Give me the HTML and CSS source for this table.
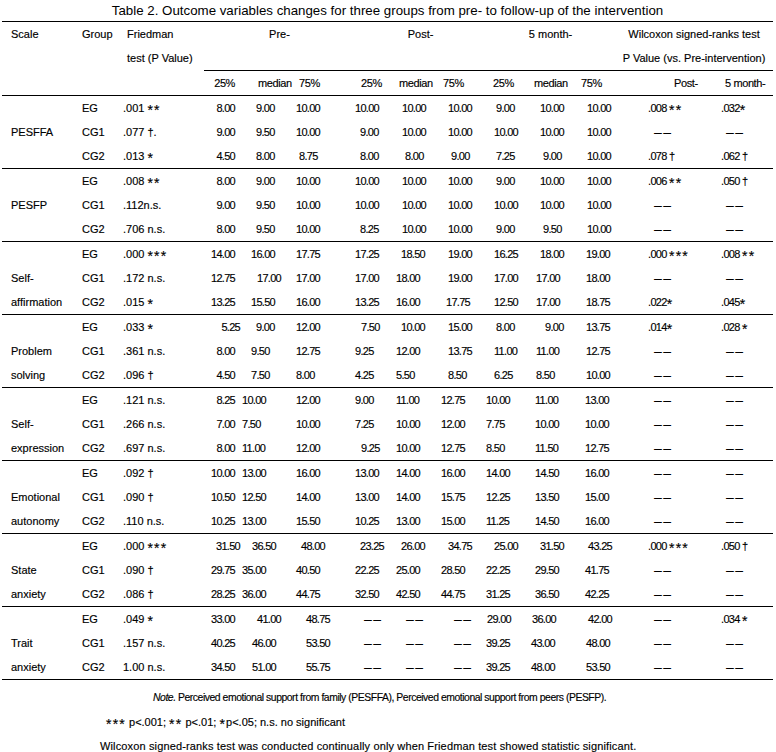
FILE: index.html
```html
<!DOCTYPE html>
<html lang="en">
<head>
<meta charset="utf-8">
<title>Table 2</title>
<link rel="stylesheet" href="styles.css">
</head>
<body>
<div class="page">
<h1 class="title">Table 2. Outcome variables changes for three groups from pre- to follow-up of the intervention</h1>
<table class="tbl">
<colgroup>
<col class="w80"><col class="w41"><col class="w81"><col class="w38"><col class="w54"><col class="w59"><col class="w41"><col class="w45"><col class="w45"><col class="w45"><col class="w50"><col class="w34"><col class="w106"><col class="w52">
</colgroup>
<thead>
<tr><th class="sc" rowspan="3">Scale</th><th class="gp" rowspan="3">Group</th><th class="fh" rowspan="3">Friedman<br>test (P Value)</th><th colspan="3" class="ctr">Pre-</th><th colspan="3" class="ctr">Post-</th><th colspan="3" class="ctr">5 month-</th><th colspan="2" class="ctr">Wilcoxon signed-ranks test</th></tr>
<tr class="midrow"><th colspan="3"></th><th colspan="3"></th><th colspan="3"></th><th colspan="2" class="ctr">P Value (vs. Pre-intervention)</th></tr>
<tr class="sub"><th class="r">25%</th><th class="p16">median</th><th class="p3">75%</th><th class="p6">25%</th><th class="p3">median</th><th class="p2">75%</th><th class="p7">25%</th><th class="p3">median</th><th>75%</th><th class="p59">Post-</th><th class="p4">5 month-</th></tr>
</thead>
<tbody class="blk">
<tr><td class="sc mid" rowspan="3">PESFFA</td><td class="gp">EG</td><td class="fr">.001 <span class="a">**</span></td><td class="r">8.00</td><td class="p14">9.00</td><td>10.00</td><td>10.00</td><td class="p6">10.00</td><td class="p7">10.00</td><td class="p10">9.00</td><td class="p9">10.00</td><td class="p6">10.00</td><td class="p33">.008 <span class="a">**</span></td><td>.032<span class="a">*</span></td></tr>
<tr><td class="gp">CG1</td><td class="fr">.077 †.</td><td class="r">9.00</td><td class="p14">9.50</td><td>10.00</td><td class="p5">9.00</td><td class="p6">10.00</td><td class="p7">10.00</td><td class="p8">10.00</td><td class="p9">10.00</td><td class="p6">10.00</td><td class="p39 d">––</td><td class="p5 d">––</td></tr>
<tr><td class="gp">CG2</td><td class="fr">.013 <span class="a">*</span></td><td class="r">4.50</td><td class="p14">8.00</td><td class="p3">8.75</td><td class="p5">8.00</td><td class="p9">8.00</td><td class="p10">9.00</td><td class="p10">7.25</td><td class="p12">9.00</td><td class="p6">10.00</td><td class="p33">.078 †</td><td>.062 †</td></tr>
</tbody>
<tbody class="blk">
<tr><td class="sc mid" rowspan="3">PESFP</td><td class="gp">EG</td><td class="fr">.008 <span class="a">**</span></td><td class="r">8.00</td><td class="p14">9.00</td><td>10.00</td><td>10.00</td><td class="p6">10.00</td><td class="p7">10.00</td><td class="p10">9.00</td><td class="p9">10.00</td><td class="p6">10.00</td><td class="p33">.006 <span class="a">**</span></td><td>.050 †</td></tr>
<tr><td class="gp">CG1</td><td class="fr">.112n.s.</td><td class="r">9.00</td><td class="p14">9.50</td><td>10.00</td><td>10.00</td><td class="p6">10.00</td><td class="p7">10.00</td><td class="p8">10.00</td><td class="p9">10.00</td><td class="p6">10.00</td><td class="p39 d">––</td><td class="p5 d">––</td></tr>
<tr><td class="gp">CG2</td><td class="fr">.706 n.s.</td><td class="r">8.00</td><td class="p14">9.50</td><td>10.00</td><td class="p5">8.25</td><td class="p6">10.00</td><td class="p7">10.00</td><td class="p10">9.00</td><td class="p12">9.50</td><td class="p6">10.00</td><td class="p39 d">––</td><td class="p5 d">––</td></tr>
</tbody>
<tbody class="blk">
<tr><td class="sc bot" rowspan="3">Self-<br>affirmation</td><td class="gp">EG</td><td class="fr">.000 <span class="a">***</span></td><td class="r">14.00</td><td class="p9">16.00</td><td>17.75</td><td>17.25</td><td class="p5">18.50</td><td class="p7">19.00</td><td class="p8">16.25</td><td class="p9">18.00</td><td class="p5">19.00</td><td class="p33">.000 <span class="a">***</span></td><td>.008 <span class="a">**</span></td></tr>
<tr><td class="gp">CG1</td><td class="fr">.172 n.s.</td><td class="r">12.75</td><td class="p15">17.00</td><td>17.00</td><td>17.00</td><td>18.00</td><td class="p7">19.00</td><td class="p8">17.00</td><td class="p5">17.00</td><td class="p5">18.00</td><td class="p39 d">––</td><td class="p5 d">––</td></tr>
<tr><td class="gp">CG2</td><td class="fr">.015 <span class="a">*</span></td><td class="r">13.25</td><td class="p9">15.50</td><td>16.00</td><td>13.25</td><td>16.00</td><td class="p5">17.75</td><td class="p8">12.50</td><td class="p5">17.00</td><td class="p5">18.75</td><td class="p33">.022<span class="a">*</span></td><td>.045<span class="a">*</span></td></tr>
</tbody>
<tbody class="blk">
<tr><td class="sc bot" rowspan="3">Problem<br>solving</td><td class="gp">EG</td><td class="fr">.033 <span class="a">*</span></td><td class="r2">5.25</td><td class="p14">9.00</td><td>12.00</td><td class="p6">7.50</td><td class="p5">10.00</td><td class="p7">15.00</td><td class="p10">8.00</td><td class="p14">9.00</td><td class="p5">13.75</td><td class="p33">.014<span class="a">*</span></td><td>.028 <span class="a">*</span></td></tr>
<tr><td class="gp">CG1</td><td class="fr">.361 n.s.</td><td class="r">8.00</td><td class="p9">9.50</td><td>12.75</td><td>9.25</td><td>12.00</td><td class="p7">13.75</td><td class="p8">11.00</td><td class="p5">11.00</td><td class="p5">12.75</td><td class="p39 d">––</td><td class="p5 d">––</td></tr>
<tr><td class="gp">CG2</td><td class="fr">.096 †</td><td class="r">4.50</td><td class="p9">7.50</td><td>8.00</td><td>4.25</td><td>5.50</td><td class="p7">8.50</td><td class="p8">6.25</td><td class="p5">8.50</td><td class="p5">10.00</td><td class="p39 d">––</td><td class="p5 d">––</td></tr>
</tbody>
<tbody class="blk">
<tr><td class="sc bot" rowspan="3">Self-<br>expression</td><td class="gp">EG</td><td class="fr">.121 n.s.</td><td class="r">8.25</td><td>10.00</td><td>12.00</td><td>9.00</td><td>11.00</td><td>12.75</td><td>10.00</td><td class="p4">11.00</td><td class="p4">13.00</td><td class="p39 d">––</td><td class="p5 d">––</td></tr>
<tr><td class="gp">CG1</td><td class="fr">.266 n.s.</td><td class="r">7.00</td><td>7.50</td><td>10.00</td><td>7.25</td><td>10.00</td><td>12.00</td><td>7.75</td><td class="p4">10.00</td><td class="p4">10.00</td><td class="p39 d">––</td><td class="p5 d">––</td></tr>
<tr><td class="gp">CG2</td><td class="fr">.697 n.s.</td><td class="r">8.00</td><td>11.00</td><td>12.00</td><td class="p6">9.25</td><td>10.00</td><td>12.75</td><td>8.50</td><td class="p4">11.50</td><td class="p4">12.75</td><td class="p39 d">––</td><td class="p5 d">––</td></tr>
</tbody>
<tbody class="blk">
<tr><td class="sc bot" rowspan="3">Emotional<br>autonomy</td><td class="gp">EG</td><td class="fr">.092 †</td><td class="r">10.00</td><td>13.00</td><td>16.00</td><td>13.00</td><td>14.00</td><td>16.00</td><td>14.00</td><td class="p4">14.50</td><td class="p4">16.00</td><td class="p39 d">––</td><td class="p5 d">––</td></tr>
<tr><td class="gp">CG1</td><td class="fr">.090 †</td><td class="r">10.50</td><td>12.50</td><td>14.00</td><td>13.00</td><td>14.00</td><td>15.75</td><td>12.25</td><td class="p4">13.50</td><td class="p4">15.00</td><td class="p39 d">––</td><td class="p5 d">––</td></tr>
<tr><td class="gp">CG2</td><td class="fr">.110 n.s.</td><td class="r">10.25</td><td>13.00</td><td>15.50</td><td>10.25</td><td>13.00</td><td>15.00</td><td>11.25</td><td class="p4">14.50</td><td class="p4">16.00</td><td class="p39 d">––</td><td class="p5 d">––</td></tr>
</tbody>
<tbody class="blk">
<tr><td class="sc bot" rowspan="3">State<br>anxiety</td><td class="gp">EG</td><td class="fr">.000 <span class="a">***</span></td><td class="r2">31.50</td><td class="p10">36.50</td><td class="p5">48.00</td><td class="p5">23.25</td><td class="p5">26.00</td><td class="p7">34.75</td><td class="p8">25.00</td><td class="p9">31.50</td><td class="p7">43.25</td><td class="p33">.000 <span class="a">***</span></td><td>.050 †</td></tr>
<tr><td class="gp">CG1</td><td class="fr">.090 †</td><td class="r">29.75</td><td>35.00</td><td>40.50</td><td>22.25</td><td>25.00</td><td>28.50</td><td>22.25</td><td class="p4">29.50</td><td class="p4">41.75</td><td class="p39 d">––</td><td class="p5 d">––</td></tr>
<tr><td class="gp">CG2</td><td class="fr">.086 †</td><td class="r">28.25</td><td>36.00</td><td>44.75</td><td>32.50</td><td>42.50</td><td>44.75</td><td>31.25</td><td class="p4">36.50</td><td class="p4">42.25</td><td class="p39 d">––</td><td class="p5 d">––</td></tr>
</tbody>
<tbody class="blk">
<tr><td class="sc bot" rowspan="3">Trait<br>anxiety</td><td class="gp">EG</td><td class="fr">.049 <span class="a">*</span></td><td class="r">33.00</td><td class="p15">41.00</td><td class="p10">48.75</td><td class="p9 d">––</td><td class="p10 d">––</td><td class="p13 d">––</td><td class="p1">29.00</td><td class="p1">36.00</td><td class="p7">42.00</td><td class="p39 d">––</td><td>.034 <span class="a">*</span></td></tr>
<tr><td class="gp">CG1</td><td class="fr">.157 n.s.</td><td class="r">40.25</td><td class="p10">46.00</td><td class="p10">53.50</td><td class="p9 d">––</td><td class="p10 d">––</td><td class="p13 d">––</td><td>39.25</td><td>43.00</td><td class="p5">48.00</td><td class="p39 d">––</td><td class="p5 d">––</td></tr>
<tr><td class="gp">CG2</td><td class="fr">1.00 n.s.</td><td class="r">34.50</td><td class="p10">51.00</td><td class="p10">55.75</td><td class="p9 d">––</td><td class="p10 d">––</td><td class="p13 d">––</td><td>39.25</td><td>48.00</td><td class="p5">53.50</td><td class="p39 d">––</td><td class="p5 d">––</td></tr>
</tbody>
</table>
<div class="notes">
<p class="n1"><i>Note.</i> Perceived emotional support from family (PESFFA), Perceived emotional support from peers (PESFP).</p>
<p class="n2"><span class="a">***</span> p&lt;.001; <span class="a">**</span> p&lt;.01; <span class="a">*</span>p&lt;.05; n.s. no significant</p>
<p class="n3">Wilcoxon signed-ranks test was conducted continually only when Friedman test showed statistic significant.</p>
</div>
</div>
</body>
</html>
```

FILE: styles.css
```css
* { box-sizing: border-box; }
body {
  margin: 0;
  background: #fff;
  color: #000;
  font-family: "Liberation Sans", Arial, sans-serif;
  font-size: 11px;
  -webkit-text-stroke: 0.15px #000;
}
.page { width: 776px; }
.title {
  margin: 0 0 0 2px;
  width: 771px;
  height: 21px;
  line-height: 21px;
  text-align: center;
  font-size: 13.3px;
  font-weight: normal;
  -webkit-text-stroke: 0;
}
.tbl {
  margin-left: 2px;
  width: 771px;
  border-collapse: collapse;
  table-layout: fixed;
}
.w80 { width: 80px; } .w41 { width: 41px; } .w81 { width: 81px; } .w38 { width: 38px; }
.w54 { width: 54px; } .w59 { width: 59px; } .w45 { width: 45px; } .w50 { width: 50px; }
.w34 { width: 34px; } .w106 { width: 106px; } .w52 { width: 52px; }
.tbl th, .tbl td {
  padding: 0;
  height: 24px;
  line-height: 24px;
  white-space: nowrap;
  font-weight: normal;
  text-align: left;
  vertical-align: top;
  overflow: visible;
}
.tbl thead { border-top: 1px solid #000; border-bottom: 1px solid #000; }
.tbl .blk { border-bottom: 1px solid #000; }
.tbl .midrow th { border-bottom: 1px solid #000; }
.tbl .ctr { text-align: center; }
.tbl .sc { padding-left: 9px; letter-spacing: 0; }
.tbl .fh { padding-left: 4px; }
.tbl .mid { vertical-align: middle; }
.tbl .bot { vertical-align: bottom; }
.tbl tbody td { letter-spacing: -0.7px; }
.tbl tbody td.sc, .tbl tbody td.gp, .tbl tbody td.fr { letter-spacing: 0; }
.tbl .sub th { letter-spacing: -0.4px; }
.tbl .r { text-align: right; padding-right: 7px; }
.tbl .r2 { text-align: right; padding-right: 2px; }
.tbl td.d { font-size: 14px; letter-spacing: 1.5px; -webkit-text-stroke: 0; }
.a {
  font-size: 14px;
  line-height: 1;
  letter-spacing: 1.2px;
  vertical-align: -3px;
}
.tbl .p1 { padding-left: 1px; } .tbl .p2 { padding-left: 2px; } .tbl .p3 { padding-left: 3px; }
.tbl .p4 { padding-left: 4px; } .tbl .p5 { padding-left: 5px; } .tbl .p6 { padding-left: 6px; }
.tbl .p7 { padding-left: 7px; } .tbl .p8 { padding-left: 8px; } .tbl .p9 { padding-left: 9px; }
.tbl .p10 { padding-left: 10px; } .tbl .p12 { padding-left: 12px; } .tbl .p13 { padding-left: 13px; }
.tbl .p14 { padding-left: 14px; } .tbl .p15 { padding-left: 15px; } .tbl .p16 { padding-left: 16px; }
.tbl .p33 { padding-left: 33px; } .tbl .p39 { padding-left: 39px; } .tbl .p59 { padding-left: 59px; }
.notes { margin-top: 6px; }
.notes p { margin: 0; height: 24px; line-height: 24px; white-space: nowrap; }
.n1 { padding-left: 153px; font-size: 10.4px; letter-spacing: -0.45px; }
.n2 { padding-left: 106px; }
.n3 { padding-left: 100px; letter-spacing: 0.14px; }
```
